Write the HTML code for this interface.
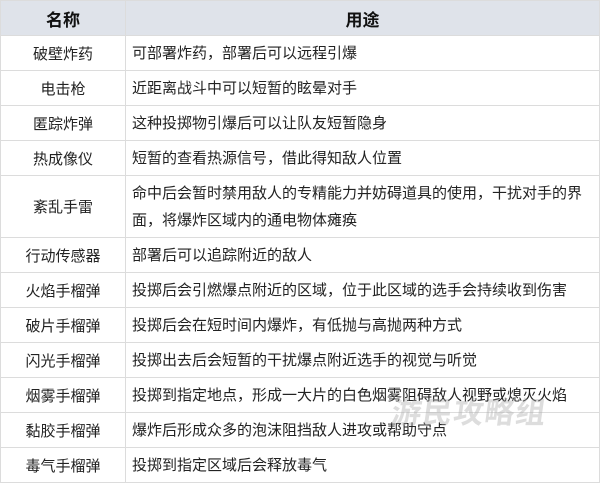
<!DOCTYPE html>
<html><head><meta charset="utf-8"><style>
html,body{margin:0;padding:0;background:#fff;width:600px;height:483px;overflow:hidden}
table{border-collapse:collapse;width:600px;font-family:"Liberation Sans","Noto Sans CJK SC",sans-serif;font-size:15px;color:#222;table-layout:fixed}
td,th{border:1px solid #dcdcdc;padding:0;height:34px}
th{background:#dfe3ea;font-weight:bold;font-size:17px;color:#111}
td:first-child{text-align:center}
td:last-child{padding-left:6px;padding-right:4px;line-height:27px}
.wm{position:absolute;left:392px;top:388px;font:bold 30px "Noto Sans CJK SC",sans-serif;color:rgba(170,170,170,0.4);letter-spacing:1px;transform:skewX(-8deg)}
</style></head><body>
<table>
<colgroup><col style="width:125px"><col></colgroup>
<tr><th>名称</th><th>用途</th></tr>
<tr><td>破壁炸药</td><td>可部署炸药，部署后可以远程引爆</td></tr>
<tr><td>电击枪</td><td>近距离战斗中可以短暂的眩晕对手</td></tr>
<tr><td>匿踪炸弹</td><td>这种投掷物引爆后可以让队友短暂隐身</td></tr>
<tr><td>热成像仪</td><td>短暂的查看热源信号，借此得知敌人位置</td></tr>
<tr><td style="height:61px">紊乱手雷</td><td>命中后会暂时禁用敌人的专精能力并妨碍道具的使用，干扰对手的界<br>面，将爆炸区域内的通电物体瘫痪</td></tr>
<tr><td>行动传感器</td><td>部署后可以追踪附近的敌人</td></tr>
<tr><td>火焰手榴弹</td><td>投掷后会引燃爆点附近的区域，位于此区域的选手会持续收到伤害</td></tr>
<tr><td>破片手榴弹</td><td>投掷后会在短时间内爆炸，有低抛与高抛两种方式</td></tr>
<tr><td>闪光手榴弹</td><td>投掷出去后会短暂的干扰爆点附近选手的视觉与听觉</td></tr>
<tr><td>烟雾手榴弹</td><td>投掷到指定地点，形成一大片的白色烟雾阻碍敌人视野或熄灭火焰</td></tr>
<tr><td>黏胶手榴弹</td><td>爆炸后形成众多的泡沫阻挡敌人进攻或帮助守点</td></tr>
<tr><td>毒气手榴弹</td><td>投掷到指定区域后会释放毒气</td></tr>
</table>
<div class="wm">游民攻略组</div>
</body></html>
